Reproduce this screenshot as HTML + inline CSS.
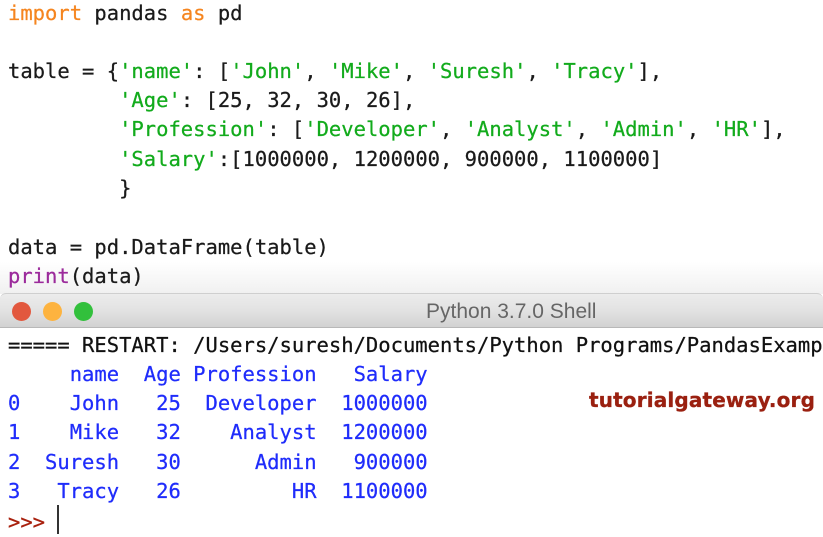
<!DOCTYPE html>
<html>
<head>
<meta charset="utf-8">
<style>
html,body{margin:0;padding:0}
body{width:823px;height:536px;position:relative;overflow:hidden;background:#fff}
.l{position:absolute;left:8px;white-space:pre;font:20.5px/30px "DejaVu Sans Mono","Liberation Mono",monospace;color:#1a1a1a;-webkit-text-stroke:.25px currentColor;filter:blur(.35px)}
.o{color:#f5851f}.g{color:#12ab1c}.p{color:#9b2a9b}.b{color:#1f2cfb}.k{color:#111}
#bar{position:absolute;left:0;top:293px;width:823px;height:35px;background:linear-gradient(#ececec,#e2e2e2 50%,#d2d2d2);border-top:1px solid #cfcfcf;border-bottom:1px solid #b8b8b8;box-sizing:border-box;border-radius:6px 6px 0 0}
#top{position:absolute;left:0;top:262px;width:823px;height:32px;background:linear-gradient(#fff,#f0f0f0)}
.d{position:absolute;top:301.5px;width:19px;height:19px;border-radius:50%}
#title{position:absolute;left:426px;top:299px;font:21px/26px "Liberation Sans",sans-serif;color:#666;white-space:pre;filter:blur(.3px)}
#logo{position:absolute;left:589px;top:387px;font:bold 20px/26px "DejaVu Sans","Liberation Sans",sans-serif;color:#9a2010;white-space:pre;letter-spacing:.15px;-webkit-text-stroke:.3px currentColor;filter:blur(.3px)}
#cur{position:absolute;left:57px;top:505px;width:2px;height:29px;background:#333}
</style>
</head>
<body>
<div id="top"></div>
<div class="l" style="top:-2px"><span class="o">import</span> pandas <span class="o">as</span> pd</div>
<div class="l" style="top:56px">table = {<span class="g">'name'</span>: [<span class="g">'John'</span>, <span class="g">'Mike'</span>, <span class="g">'Suresh'</span>, <span class="g">'Tracy'</span>],</div>
<div class="l" style="top:85px">         <span class="g">'Age'</span>: [25, 32, 30, 26],</div>
<div class="l" style="top:114px">         <span class="g">'Profession'</span>: [<span class="g">'Developer'</span>, <span class="g">'Analyst'</span>, <span class="g">'Admin'</span>, <span class="g">'HR'</span>],</div>
<div class="l" style="top:144px">         <span class="g">'Salary'</span>:[1000000, 1200000, 900000, 1100000]</div>
<div class="l" style="top:173px">         }</div>
<div class="l" style="top:232px">data = pd.DataFrame(table)</div>
<div class="l" style="top:261px"><span class="p">print</span>(data)</div>
<div id="bar"></div>
<div class="d" style="left:12px;background:#e2583e"></div>
<div class="d" style="left:43px;background:#fdb33f"></div>
<div class="d" style="left:74px;background:#32c03c"></div>
<div id="title">Python 3.7.0 Shell</div>
<div class="l k" style="top:330px">===== RESTART: /Users/suresh/Documents/Python Programs/PandasExample</div>
<div class="l b" style="top:359px">     name  Age Profession   Salary</div>
<div class="l b" style="top:388px">0    John   25  Developer  1000000</div>
<div class="l b" style="top:417px">1    Mike   32    Analyst  1200000</div>
<div class="l b" style="top:447px">2  Suresh   30      Admin   900000</div>
<div class="l b" style="top:476px">3   Tracy   26         HR  1100000</div>
<div class="l" style="top:507px;color:#a8200d">&gt;&gt;&gt;</div>
<div id="cur"></div>
<div id="logo">tutorialgateway.org</div>
</body>
</html>
